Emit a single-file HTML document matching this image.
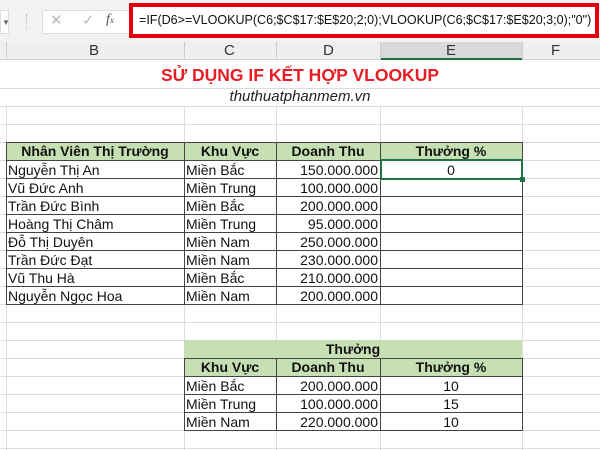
<!DOCTYPE html>
<html><head><meta charset="utf-8"><style>
*{margin:0;padding:0;box-sizing:border-box}
body{width:600px;height:450px;overflow:hidden;background:#fff;font-family:"Liberation Sans",Arial,sans-serif;position:relative}
.a{position:absolute}
.t{position:absolute;font-size:14px;line-height:18px;color:#111;white-space:nowrap}
.hl{position:absolute;height:1px;background:#dcdcdc;left:0;width:600px}
.vl{position:absolute;width:1px;background:#dcdcdc}
.g{background:#c6e0b4}
</style></head><body>
<!-- formula bar -->
<div class="a" style="left:0;top:0;width:600px;height:42px;background:#f2f2f2"></div>
<div class="a" style="left:0;top:10px;width:9px;height:24px;background:#fff;border:1px solid #ddd"></div>
<div class="a" style="left:2px;top:18px;font-size:8px;color:#666">▼</div>
<div class="a" style="left:26px;top:14px;width:1px;height:16px;border-left:1px dotted #bbb"></div>
<div class="a" style="left:42px;top:10px;width:560px;height:24px;background:#fff;border:1px solid #ddd"></div>
<div class="t" style="left:50px;top:12px;color:#bbb;font-size:15px">✕</div>
<div class="t" style="left:82px;top:12px;color:#bbb;font-size:15px">✓</div>
<div class="t" style="left:106px;top:11px;color:#555;font-style:italic;font-family:'Liberation Serif',serif;font-size:14px">f<span style="font-size:9px">x</span></div>
<div class="a" style="left:129px;top:3px;width:470px;height:35px;border:4px solid #e4000f;background:#fff"></div>
<div class="t" style="left:139px;top:11px;font-size:13px;transform:scaleX(0.964);transform-origin:0 0">=IF(D6&gt;=VLOOKUP(C6;$C$17:$E$20;2;0);VLOOKUP(C6;$C$17:$E$20;3;0);"0")</div>
<!-- column headers -->
<div class="a" style="left:0;top:42px;width:600px;height:18px;background:#efefef;border-bottom:1px solid #d4d4d4"></div>
<div class="a" style="left:380px;top:42px;width:142px;height:18px;background:#d9d9d9;border-bottom:2px solid #217346"></div>
<div class="vl" style="left:6px;top:42px;height:18px;background:#ccc"></div>
<div class="vl" style="left:184px;top:42px;height:18px;background:#ccc"></div>
<div class="vl" style="left:276px;top:42px;height:18px;background:#ccc"></div>
<div class="vl" style="left:380px;top:42px;height:18px;background:#ccc"></div>
<div class="vl" style="left:522px;top:42px;height:18px;background:#ccc"></div>
<div class="t" style="left:89px;top:42px;font-size:15px;color:#333">B</div>
<div class="t" style="left:224px;top:42px;font-size:15px;color:#333">C</div>
<div class="t" style="left:323px;top:42px;font-size:15px;color:#333">D</div>
<div class="t" style="left:446px;top:42px;font-size:15px;color:#333">E</div>
<div class="t" style="left:551px;top:42px;font-size:15px;color:#333">F</div>
<!-- grid -->
<div class="hl" style="top:88px"></div><div class="hl" style="top:106px"></div><div class="hl" style="top:124px"></div><div class="hl" style="top:142px"></div>
<div class="hl" style="top:160px"></div><div class="hl" style="top:178px"></div><div class="hl" style="top:196px"></div><div class="hl" style="top:214px"></div><div class="hl" style="top:232px"></div><div class="hl" style="top:250px"></div><div class="hl" style="top:268px"></div><div class="hl" style="top:286px"></div><div class="hl" style="top:304px"></div><div class="hl" style="top:322px"></div><div class="hl" style="top:340px"></div><div class="hl" style="top:358px"></div><div class="hl" style="top:376px"></div><div class="hl" style="top:394px"></div><div class="hl" style="top:412px"></div><div class="hl" style="top:430px"></div><div class="hl" style="top:448px"></div>
<div class="vl" style="left:6px;top:106px;height:344px"></div>
<div class="vl" style="left:184px;top:106px;height:344px"></div>
<div class="vl" style="left:276px;top:106px;height:344px"></div>
<div class="vl" style="left:380px;top:106px;height:344px"></div>
<div class="vl" style="left:522px;top:106px;height:344px"></div>
<div class="a" style="left:0;top:60px;width:600px;height:46px;background:#fff"></div>
<div class="hl" style="top:88px"></div><div class="hl" style="top:106px"></div>
<div class="t" style="left:0;width:600px;text-align:center;top:66px;color:#e81c24;font-weight:bold;font-size:17.5px">SỬ DỤNG IF KẾT HỢP VLOOKUP</div>
<div class="t" style="left:0;width:600px;text-align:center;top:88px;font-style:italic;font-size:15px;color:#222">thuthuatphanmem.vn</div>
<!-- main table -->
<div class="a g" style="left:6px;top:142px;width:516px;height:18px"></div>
<div class="a" style="left:6px;top:142px;width:517px;height:163px;border:1px solid #444"></div>
<div class="a" style="left:6px;top:160px;width:516px;height:1px;background:#444"></div>
<div class="a" style="left:6px;top:178px;width:516px;height:1px;background:#444"></div><div class="a" style="left:6px;top:196px;width:516px;height:1px;background:#444"></div><div class="a" style="left:6px;top:214px;width:516px;height:1px;background:#444"></div><div class="a" style="left:6px;top:232px;width:516px;height:1px;background:#444"></div><div class="a" style="left:6px;top:250px;width:516px;height:1px;background:#444"></div><div class="a" style="left:6px;top:268px;width:516px;height:1px;background:#444"></div><div class="a" style="left:6px;top:286px;width:516px;height:1px;background:#444"></div>
<div class="a" style="left:184px;top:142px;width:1px;height:163px;background:#444"></div>
<div class="a" style="left:276px;top:142px;width:1px;height:163px;background:#444"></div>
<div class="a" style="left:380px;top:142px;width:1px;height:163px;background:#444"></div>
<div class="t" style="left:6px;width:178px;text-align:center;top:142px;font-weight:bold">Nhân Viên Thị Trường</div>
<div class="t" style="left:184px;width:92px;text-align:center;top:142px;font-weight:bold">Khu Vực</div>
<div class="t" style="left:276px;width:104px;text-align:center;top:142px;font-weight:bold">Doanh Thu</div>
<div class="t" style="left:380px;width:142px;text-align:center;top:142px;font-weight:bold">Thưởng %</div>
<div class="t" style="left:8px;top:161px">Nguyễn Thị An<br>Vũ Đức Anh<br>Trần Đức Bình<br>Hoàng Thị Châm<br>Đỗ Thị Duyên<br>Trần Đức Đạt<br>Vũ Thu Hà<br>Nguyễn Ngọc Hoa</div>
<div class="t" style="left:186px;top:161px">Miền Bắc<br>Miền Trung<br>Miền Bắc<br>Miền Trung<br>Miền Nam<br>Miền Nam<br>Miền Bắc<br>Miền Nam</div>
<div class="t" style="left:276px;width:102px;text-align:right;top:161px">150.000.000<br>100.000.000<br>200.000.000<br>95.000.000<br>250.000.000<br>230.000.000<br>210.000.000<br>200.000.000</div>
<div class="a" style="left:380px;top:159px;width:143px;height:21px;border:2px solid #217346"></div>
<div class="a" style="left:520px;top:177px;width:5px;height:5px;background:#217346"></div>
<div class="t" style="left:380px;width:142px;text-align:center;top:161px">0</div>
<!-- bottom table -->
<div class="a g" style="left:184px;top:340px;width:338px;height:36px"></div>
<div class="a" style="left:184px;top:358px;width:339px;height:73px;border:1px solid #444"></div>
<div class="a" style="left:184px;top:376px;width:338px;height:1px;background:#444"></div>
<div class="a" style="left:184px;top:394px;width:338px;height:1px;background:#444"></div>
<div class="a" style="left:184px;top:412px;width:338px;height:1px;background:#444"></div>
<div class="a" style="left:276px;top:358px;width:1px;height:72px;background:#444"></div>
<div class="a" style="left:380px;top:358px;width:1px;height:72px;background:#444"></div>
<div class="t" style="left:184px;width:338px;text-align:center;top:340px;font-weight:bold">Thưởng</div>
<div class="t" style="left:184px;width:92px;text-align:center;top:358px;font-weight:bold">Khu Vực</div>
<div class="t" style="left:276px;width:104px;text-align:center;top:358px;font-weight:bold">Doanh Thu</div>
<div class="t" style="left:380px;width:142px;text-align:center;top:358px;font-weight:bold">Thưởng %</div>
<div class="t" style="left:186px;top:377px">Miền Bắc<br>Miền Trung<br>Miền Nam</div>
<div class="t" style="left:276px;width:102px;text-align:right;top:377px">200.000.000<br>100.000.000<br>220.000.000</div>
<div class="t" style="left:380px;width:142px;text-align:center;top:377px">10<br>15<br>10</div>
</body></html>
